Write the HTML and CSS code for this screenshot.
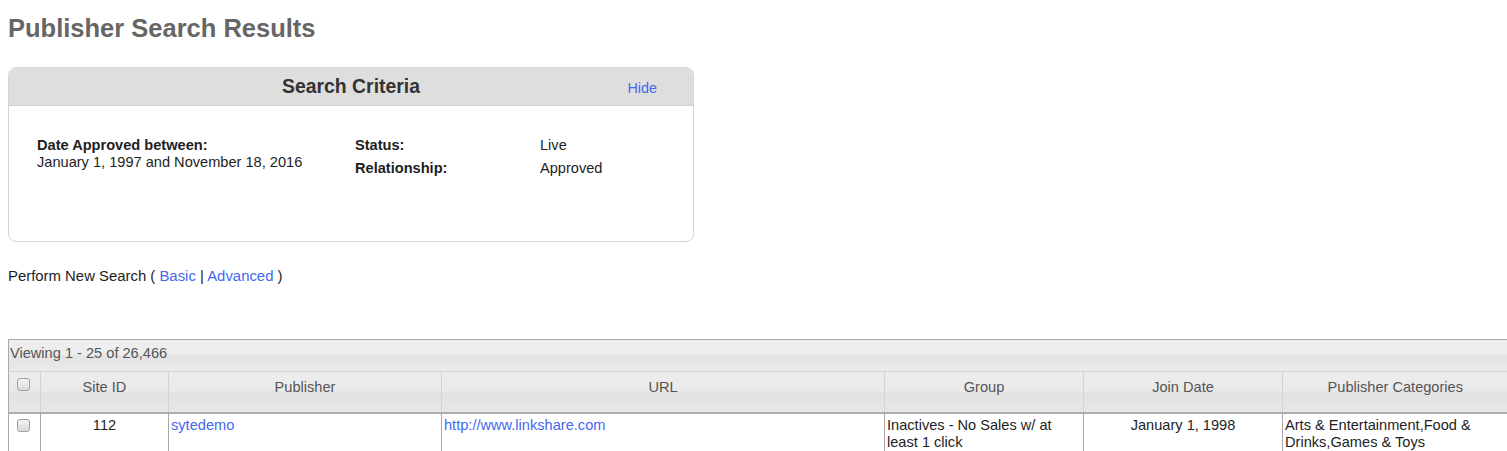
FILE: index.html
```html
<!DOCTYPE html>
<html lang="en">
<head>
    <meta charset="UTF-8">
    <title>Publisher Search Results</title>
    <link rel="stylesheet" href="styles.css">
</head>
<body>
    <h1 class="page-title">Publisher Search Results</h1>
    <div class="criteria">
        <div class="criteria-head">
            <h2>Search Criteria</h2>
            <a href="#" class="hide-link">Hide</a>
        </div>
        <div class="criteria-body">
            <div class="date-block">
                <div class="label">Date Approved between:</div>
                <div>January 1, 1997 and November 18, 2016</div>
            </div>
            <div class="pairs">
                <div class="label">Status:</div>
                <div>Live</div>
                <div class="label">Relationship:</div>
                <div>Approved</div>
            </div>
        </div>
    </div>
    <p class="new-search">Perform New Search ( <a href="#">Basic</a> | <a href="#">Advanced</a> )</p>
    <table class="grid">
        <colgroup>
            <col style="width:32px">
            <col style="width:128px">
            <col style="width:273px">
            <col style="width:443px">
            <col style="width:199px">
            <col style="width:199px">
            <col style="width:225px">
        </colgroup>
        <thead>
            <tr class="caption-row">
                <td colspan="7">Viewing 1 - 25 of 26,466</td>
            </tr>
            <tr class="head-row">
                <th><span class="box"></span></th>
                <th>Site ID</th>
                <th>Publisher</th>
                <th>URL</th>
                <th>Group</th>
                <th>Join Date</th>
                <th>Publisher Categories</th>
            </tr>
        </thead>
        <tbody>
            <tr>
                <td class="chk"><span class="box"></span></td>
                <td class="center">112</td>
                <td><a href="#">sytedemo</a></td>
                <td><a href="#">http://www.linkshare.com</a></td>
                <td>Inactives - No Sales w/ at least 1 click</td>
                <td class="center">January 1, 1998</td>
                <td>Arts &amp; Entertainment,Food &amp; Drinks,Games &amp; Toys</td>
            </tr>
        </tbody>
    </table>
</body>
</html>
```

FILE: styles.css
```css
html {
    overflow: hidden;
}
body {
    margin: 8px 0 8px 8px;
    font-family: "Liberation Sans", Arial, sans-serif;
    font-size: 14.6px;
    color: #1e1e1e;
    background: #fff;
}
a {
    color: #4468f0;
    text-decoration: none;
}
.page-title {
    margin: 6px 0 25px;
    font-size: 25.5px;
    line-height: 28px;
    color: #666;
}
.criteria {
    width: 684px;
    border: 1px solid #d6d6d6;
    border-radius: 8px;
    overflow: hidden;
}
.criteria-head {
    position: relative;
    height: 37px;
    background: #dedede;
    border-bottom: 1px solid #d0d0d0;
    text-align: center;
}
.criteria-head h2 {
    margin: 0;
    font-size: 19.4px;
    line-height: 37px;
    color: #333;
}
.hide-link {
    position: absolute;
    right: 36px;
    top: 12px;
    font-size: 14.4px;
}
.criteria-body {
    display: flex;
    height: 135px;
    padding: 31px 0 0 28px;
    box-sizing: border-box;
    line-height: 17px;
}
.date-block {
    width: 318px;
}
.label {
    font-weight: bold;
}
.pairs {
    display: grid;
    grid-template-columns: 185px auto;
    grid-auto-rows: 23px;
}
.new-search {
    margin: 26px 0 54px;
    font-size: 14.9px;
    line-height: 17px;
}
.grid {
    table-layout: fixed;
    width: 1499px;
    border-collapse: collapse;
    border-top: 1px solid #a9a9a9;
    border-left: 1px solid #a9a9a9;
}
.caption-row td {
    height: 32px;
    padding: 5px 1px 0;
    vertical-align: top;
    line-height: 17px;
    color: #555;
    background: linear-gradient(#efefef 0%, #ececec 45%, #e3e3e3 50%, #eaeaea 100%);
    border-bottom: 1px solid #d3d3d3;
    box-sizing: border-box;
}
.head-row th {
    height: 41px;
    padding: 7px 0 0;
    vertical-align: top;
    line-height: 17px;
    font-weight: normal;
    color: #555;
    background: linear-gradient(#ededed 0%, #e9e9e9 45%, #e1e1e1 55%, #e8e8e8 100%);
    border-left: 1px solid #d3d3d3;
    border-bottom: 2px solid #acacac;
    box-sizing: border-box;
}
.head-row th:first-child {
    border-left: none;
    text-align: left;
    padding: 6px 0 0 8px;
}
.box {
    display: inline-block;
    width: 11px;
    height: 11px;
    border: 1px solid #a0a0a0;
    border-radius: 3px;
    background: linear-gradient(#f4f4f4, #d9d9d9);
    vertical-align: top;
}
tbody td {
    vertical-align: top;
    padding: 3px 2px 0;
    height: 40px;
    line-height: 17px;
    border-left: 1px solid #a9a9a9;
}
tbody td.chk {
    border-left: none;
    padding: 5px 0 0 8px;
}
.center {
    text-align: center;
}
```
